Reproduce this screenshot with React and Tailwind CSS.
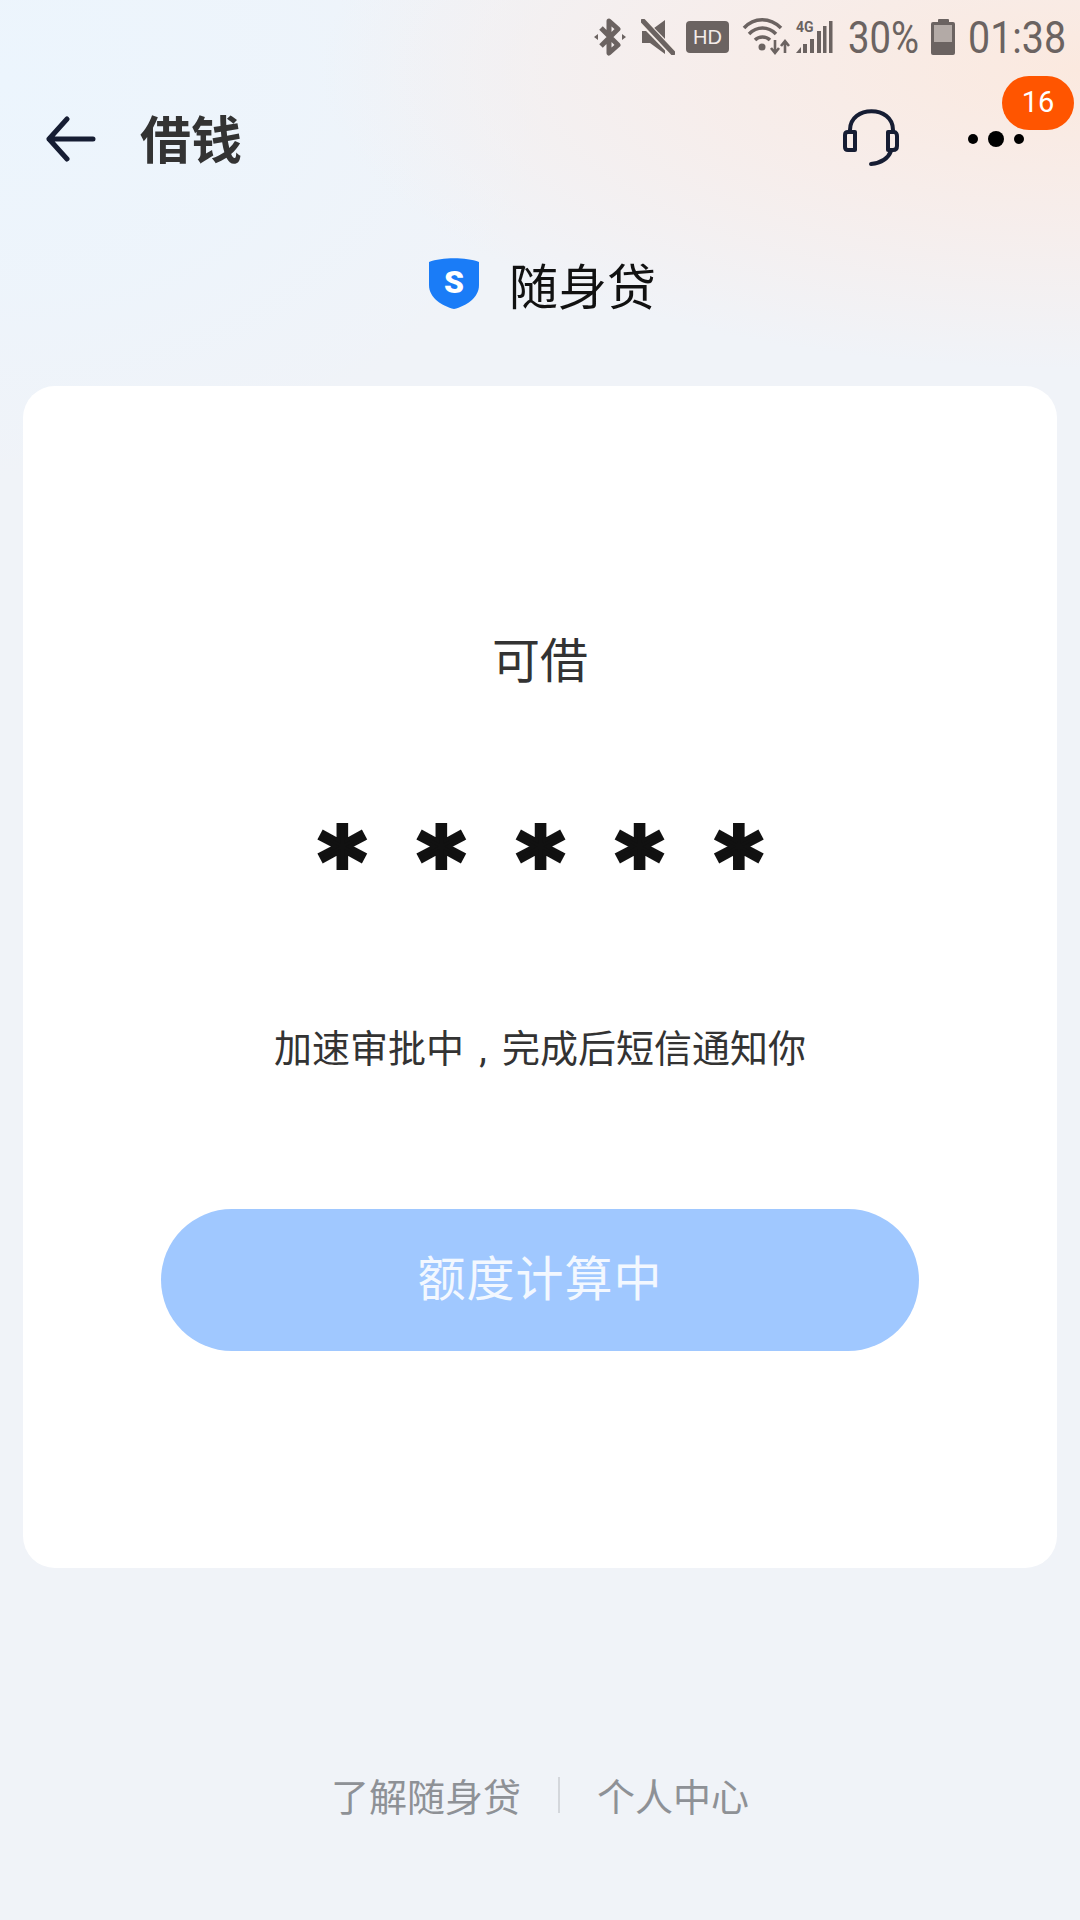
const C = "#6b6361";
const cjk = "font-['Noto_Sans_CJK_SC','Noto_Sans',sans-serif]";

function StatusBar() {
  return (
    <div className="flex h-[74px] items-center justify-end pr-[15px] font-['Roboto',sans-serif] text-[#6b6361]">
      <svg width="34" height="38" viewBox="0 0 34 38" className="mr-[14px]" fill="none">
        <path d="M8 10 L25 27 L16 35 V3 L25 11 L8 28" stroke={C} strokeWidth="5" strokeLinejoin="round" />
        <path d="M1 19 l4-3 v6z M33 19 l-4-3 v6z" fill={C} />
      </svg>
      <svg width="34" height="36" viewBox="0 0 34 36" className="mr-[11px]" fill="none">
        <path d="M1 12 H9 L24 1 V35 L9 24 H1 Z" fill={C} />
        <path d="M2 3 L32 34" stroke="#f7eee9" strokeWidth="8" />
        <path d="M2 2 L32 34" stroke={C} strokeWidth="5" strokeLinecap="round" />
      </svg>
      <div className="mr-[13px] flex h-[32px] w-[43px] items-center justify-center rounded-[4px] bg-[#6b6361] font-['Liberation_Sans',sans-serif] text-[20px] leading-none text-[#f3ece8]">HD</div>
      <svg width="48" height="38" viewBox="0 0 48 38" className="mr-[6px]" fill="none">
        <path d="M2 10 C12 -1 28 -1 39 10" stroke={C} strokeWidth="3.5" />
        <path d="M7 16 C15 8 26 8 34 16" stroke={C} strokeWidth="3.5" />
        <path d="M13 22 C17 18 24 18 28 22" stroke={C} strokeWidth="3.5" />
        <circle cx="20" cy="29" r="3.5" fill={C} />
        <path d="M33 22 V34 M29 30 L33 35 L37 30" stroke={C} strokeWidth="2.6" />
        <path d="M43 35 V24 M39 28 L43 23 L47 28" stroke={C} strokeWidth="2.6" />
      </svg>
      <div className="relative mr-[15px] h-[34px] w-[37px]">
        <svg width="37" height="34" viewBox="0 0 37 34">
          <path d="M0 33 L5 27 V33Z" fill={C} />
          <rect x="7" y="24" width="4" height="9" fill={C} />
          <rect x="14" y="19" width="4" height="14" fill={C} />
          <rect x="21" y="11" width="4" height="22" fill={C} />
          <rect x="27" y="6" width="3.5" height="27" fill={C} />
          <rect x="33" y="1" width="3.5" height="32" fill={C} />
        </svg>
        <span className="absolute left-0 top-0 text-[14px] font-bold leading-[14px]">4G</span>
      </div>
      <div className="mr-[13px] w-[70px] origin-left scale-x-[0.85] whitespace-nowrap text-[45px] leading-none">30%</div>
      <div className="mr-[13px] flex h-[36px] w-[24px] flex-col items-center">
        <div className="h-[3px] w-[11px] rounded-t-[1px] bg-[#6b6361]" />
        <div className="flex h-[33px] w-[24px] flex-col justify-end rounded-[2px] border-[3px] border-[#6b6361] bg-[#b3aaa6]">
          <div className="h-[10px] bg-[#6b6361]" />
        </div>
      </div>
      <div className="w-[97px] origin-left scale-x-[0.875] whitespace-nowrap text-[45px] leading-none">01:38</div>
    </div>
  );
}

function NavBar() {
  return (
    <div className="relative flex h-[130px] items-center pl-[46px] pr-[56px]">
      <svg width="50" height="46" viewBox="0 0 50 46" fill="none" className="mr-[44px]">
        <path d="M21 3 L3 23 L21 43 M3 23 H47" stroke="#161d33" strokeWidth="5" strokeLinecap="round" strokeLinejoin="round" />
      </svg>
      <div className={`${cjk} mb-[4px] text-[51px] font-bold leading-none text-[#333333]`}>借钱</div>
      <div className="flex-1" />
      <svg width="58" height="58" viewBox="0 0 58 58" fill="none" className="mr-[68px] mb-[2px]">
        <path d="M8 23 V21 C8 -4 51 -4 51 21 V23" stroke="#161d33" strokeWidth="4" />
        <path d="M13 23 H6 C4 23 3 24 3 26 V38 C3 40 4 41 6 41 H13 Z" stroke="#161d33" strokeWidth="4" strokeLinejoin="round" />
        <path d="M46 23 H52 C54 23 55 25 55 27 V37 C55 40 53 41 51 41 H46 Z" stroke="#161d33" strokeWidth="4" strokeLinejoin="round" />
        <path d="M49 42 C46 50 38 54 29 55" stroke="#161d33" strokeWidth="4" strokeLinecap="round" />
      </svg>
      <div className="flex items-center gap-[10px]">
        <div className="size-[10px] rounded-full bg-black" />
        <div className="size-[16px] rounded-full bg-black" />
        <div className="size-[10px] rounded-full bg-black" />
      </div>
      <div className="absolute right-[6px] top-[2px] flex h-[54px] w-[72px] items-center justify-center rounded-full bg-[#ff5500] font-['Roboto',sans-serif] text-[29px] text-white">16</div>
    </div>
  );
}

export default function App() {
  return (
    <div className={`${cjk} flex h-[1920px] w-[1080px] flex-col bg-[#f0f3f8] bg-[radial-gradient(760px_300px_at_100%_70px,#fbe9df_0%,rgba(248,236,232,0.8)_50%,rgba(240,243,248,0)_100%),radial-gradient(560px_400px_at_0%_80px,#ecf5fd_0%,rgba(236,245,253,0.6)_55%,rgba(240,243,248,0)_100%)] bg-no-repeat`}>
      <StatusBar />
      <NavBar />
      <div className="mt-[51px] flex h-[56px] items-center justify-center pl-[4px]">
        <svg width="52" height="52" viewBox="0 0 52 52" className="mr-[29px]">
          <path d="M1 5 C14 0 38 0 51 5 V28 C51 41 38 49 26 52 C14 49 1 41 1 28 Z" fill="#1a7cf7" />
          <text x="26" y="36" textAnchor="middle" fill="#ffffff" fontSize="32" fontWeight="900" fontFamily="'Roboto',sans-serif">S</text>
        </svg>
        <div className="text-[49px] leading-none text-[#111111]">随身贷</div>
      </div>
      <div className="mx-[23px] mt-[75px] flex h-[1182px] flex-col items-center rounded-[32px] bg-white">
        <div className="mt-[243px] text-[48px] leading-[56px] text-[#333333]">可借</div>
        <div className="mt-[123px] h-[110px] whitespace-nowrap pl-[52px] font-['DejaVu_Sans',sans-serif] text-[92px] font-bold leading-[110px] tracking-[51px] text-[#111111] [-webkit-text-stroke:4px_#111111]">*****</div>
        <div className="mt-[103px] text-[38px] leading-[50px] text-[#333333]">
          加速审批中<span className="inline-block w-[38px] text-center font-['Roboto',sans-serif]">,</span>完成后短信通知你
        </div>
        <div className="mt-[135px] flex h-[142px] w-[758px] items-center justify-center rounded-full bg-[#a0c8ff] pb-[10px] text-[48px] tracking-[1px] text-[#f3f8ff]">额度计算中</div>
      </div>
      <div className="mt-[204px] flex items-center justify-center text-[38px] leading-[46px] text-[#8e9196]">
        <div>了解随身贷</div>
        <div className="mx-[37px] h-[36px] w-[2px] bg-[#d4d7dc]" />
        <div>个人中心</div>
      </div>
    </div>
  );
}
